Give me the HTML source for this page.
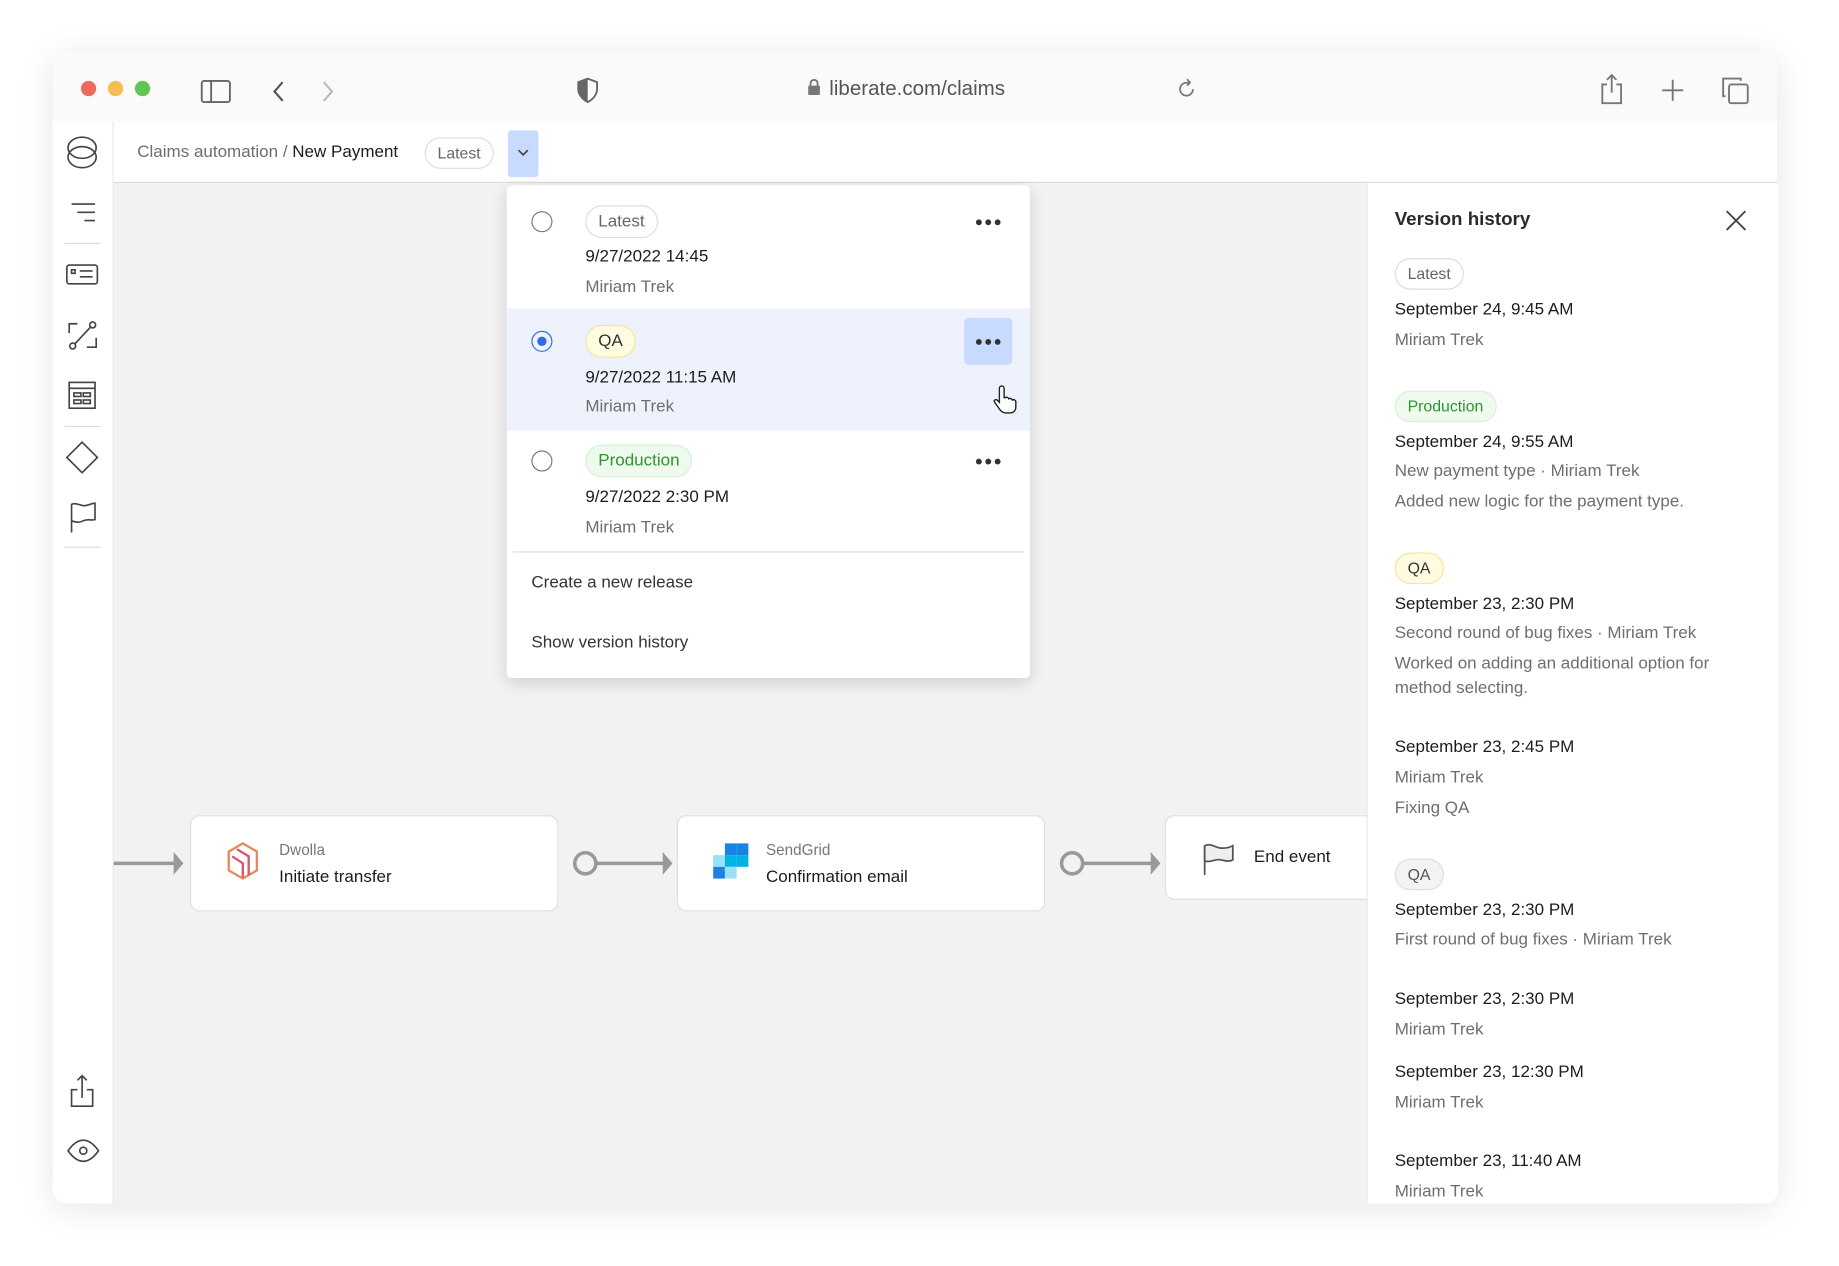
<!DOCTYPE html>
<html><head><meta charset="utf-8"><style>
html,body{margin:0;padding:0;background:#fff;overflow:hidden}
body{width:1839px;height:1266px;position:relative;font-family:"Liberation Sans",sans-serif}
#s{position:absolute;left:0;top:0;width:1568px;height:1080px;transform:scale(1.173);transform-origin:0 0}
.a{position:absolute}
.t{position:absolute;white-space:nowrap;line-height:20px;height:20px;font-size:14.5px;color:#1c1c1c}
.g{color:#6e6e6e}
.pill{position:absolute;height:25px;line-height:25px;border-radius:14px;font-size:13.5px;padding:0 10px;box-sizing:border-box}
.pl{border:1px solid #ddd;color:#666;background:#fff}
.pq{border:1px solid #f3e59a;background:#fefbe0;color:#333}
.pp{border:1px solid #d7efd7;background:#effaef;color:#2b962b}
.pg{border:1px solid #ddd;background:#f3f3f3;color:#555}
.radio{position:absolute;width:18px;height:18px;border:1.5px solid #777;border-radius:50%;box-sizing:border-box}
.dots{position:absolute;width:24px;height:6px}
.dots i{position:absolute;top:0;width:5px;height:5px;border-radius:50%;background:#333}
svg{position:absolute;overflow:visible}
</style></head><body><div id="s">
<div class="a" style="left:45px;top:45px;width:1470px;height:981px;border-radius:12px;background:#fff;box-shadow:0 4px 30px rgba(0,0,0,.10);overflow:hidden">
 <div class="a" style="left:0;top:0;width:1470px;height:59px;background:#fafaf8"></div>
 <div class="a" style="left:0;top:59px;width:51px;height:922px;background:#fff;border-right:1px solid #e6e6e6"></div>
 <div class="a" style="left:52px;top:59px;width:1418px;height:51px;background:#fff;border-bottom:1px solid #dcdcdc"></div>
 <div class="a" style="left:52px;top:111px;width:1068px;height:870px;background:#f2f2f2"></div>
</div>
<div class="a" style="left:69px;top:69px;width:13px;height:13px;border-radius:50%;background:#ed6a5e"></div>
<div class="a" style="left:92px;top:69px;width:13px;height:13px;border-radius:50%;background:#f5bf4f"></div>
<div class="a" style="left:115px;top:69px;width:13px;height:13px;border-radius:50%;background:#61c554"></div>
<svg style="left:171px;top:68px" width="26" height="20" fill="none" stroke="#666" stroke-width="1.6"><rect x="1" y="1" width="24" height="18" rx="2"/><line x1="9" y1="1" x2="9" y2="19"/></svg>
<svg style="left:231px;top:68px" width="12" height="20" fill="none" stroke="#555" stroke-width="1.8"><path d="M10 2L3 10L10 18"/></svg>
<svg style="left:274px;top:68px" width="12" height="20" fill="none" stroke="#bbb" stroke-width="1.8"><path d="M2 2L9 10L2 18"/></svg>
<svg style="left:491px;top:66px" width="20" height="22"><path d="M10 1L18 4V10C18 15 14 19 10 21C6 19 2 15 2 10V4Z" fill="none" stroke="#666" stroke-width="1.6"/><path d="M10 1L2 4V10C2 15 6 19 10 21Z" fill="#666"/></svg>
<svg style="left:689px;top:67px" width="10" height="14"><rect x="0" y="6" width="10" height="8" rx="1" fill="#777"/><path d="M2 6V4a3 3 0 0 1 6 0v2" fill="none" stroke="#777" stroke-width="1.6"/></svg>
<div class="t" style="left:707px;top:65px;font-size:17.5px;color:#555">liberate.com/claims</div>
<svg style="left:1004px;top:66px" width="16" height="18" fill="none" stroke="#777" stroke-width="1.5"><path d="M13 10a5.5 5.5 0 1 1-5.5-5.5H10"/><path d="M8 1.5L10.5 4.5L8 7"/></svg>
<svg style="left:1364px;top:63px" width="20" height="26" fill="none" stroke="#777" stroke-width="1.6"><path d="M6 9H2V25H18V9H14"/><path d="M10 16V1M6 5L10 1L14 5"/></svg>
<svg style="left:1417px;top:68px" width="18" height="18" stroke="#777" stroke-width="1.6"><path d="M9 0V18M0 9H18"/></svg>
<svg style="left:1468px;top:66px" width="23" height="23" fill="none" stroke="#777" stroke-width="1.6"><rect x="6" y="6" width="16" height="16" rx="2"/><path d="M3 16H1V1H16V3"/></svg>
<svg style="left:57px;top:116px" width="26" height="28" fill="none" stroke="#444" stroke-width="1.4"><ellipse cx="13" cy="10" rx="12" ry="9"/><ellipse cx="13" cy="18" rx="12" ry="9"/></svg>
<svg style="left:59px;top:173px" width="24" height="16" stroke="#444" stroke-width="1.4"><path d="M2 1H22M7 8H22M13 15H22"/></svg>
<div class="a" style="left:55px;top:207px;width:31px;height:1px;background:#ddd"></div>
<svg style="left:56px;top:225px" width="28" height="18" fill="none" stroke="#444" stroke-width="1.4"><rect x="1" y="1" width="26" height="16" rx="2"/><path d="M12 6H23M12 11H23"/><rect x="5" y="5" width="3" height="3"/></svg>
<svg style="left:58px;top:273px" width="25" height="26" fill="none" stroke="#444" stroke-width="1.4"><path d="M1 11V3H8M24 15V23H16"/><circle cx="4" cy="22" r="2.5"/><circle cx="21" cy="4" r="2.5"/><path d="M6 20L19 6"/></svg>
<svg style="left:58px;top:325px" width="24" height="24" fill="none" stroke="#444" stroke-width="1.4"><rect x="1" y="1" width="22" height="22"/><path d="M1 6H23"/><rect x="5" y="10" width="6" height="3"/><rect x="13" y="10" width="6" height="3"/><rect x="5" y="16" width="6" height="3"/><rect x="13" y="16" width="6" height="3"/></svg>
<div class="a" style="left:55px;top:363px;width:31px;height:1px;background:#ddd"></div>
<svg style="left:56px;top:376px" width="28" height="28" fill="none" stroke="#444" stroke-width="1.4"><path d="M14 1L27 14L14 27L1 14Z"/></svg>
<svg style="left:59px;top:428px" width="24" height="26" fill="none" stroke="#444" stroke-width="1.4"><path d="M2 26V2C7 0 10 4 14 3S20 1 22 1V15C18 16 16 14 12 16S5 17 2 16"/></svg>
<div class="a" style="left:55px;top:466px;width:31px;height:1px;background:#ddd"></div>
<svg style="left:60px;top:916px" width="20" height="28" fill="none" stroke="#444" stroke-width="1.4"><path d="M6 13H1V27H19V13H14"/><path d="M10 20V1M6 5L10 1L14 5"/></svg>
<svg style="left:57px;top:971px" width="28" height="20" fill="none" stroke="#444" stroke-width="1.4"><path d="M1 10C6 3 10 1 14 1S22 3 27 10C22 17 18 19 14 19S6 17 1 10Z"/><circle cx="14" cy="10" r="3"/></svg>
<div class="t" style="left:117px;top:120px;color:#6e6e6e">Claims automation / <span style="color:#1c1c1c">New Payment</span></div>
<div class="pill pl" style="left:362px;top:117px;height:27px;line-height:26px">Latest</div>
<div class="a" style="left:433px;top:111px;width:26px;height:40px;background:#c8dafd;border-radius:3px"></div>
<svg style="left:441px;top:127px" width="10" height="6" fill="none" stroke="#444" stroke-width="1.4"><path d="M1 1L5 5L9 1"/></svg>
<svg style="left:97px;top:725px" width="900" height="22" fill="none" stroke="#999" stroke-width="3"><path d="M0 11H54"/><path d="M52 4L58 11L52 18Z" fill="#999" stroke-width="2"/><circle cx="402" cy="11" r="9" fill="#f2f2f2"/><path d="M411 11H471"/><path d="M469 4L475 11L469 18Z" fill="#999" stroke-width="2"/><circle cx="817" cy="11" r="9" fill="#f2f2f2"/><path d="M826 11H887"/><path d="M885 4L891 11L885 18Z" fill="#999" stroke-width="2"/></svg>
<div class="a" style="left:162px;top:695px;width:314px;height:82px;background:#fff;border:1px solid #e0e0e0;border-radius:8px;box-sizing:border-box"></div>
<svg style="left:193px;top:718px" width="28" height="32" fill="none" stroke-width="2"><path d="M14 1L26 8V24L14 31L2 24V8Z" stroke="#e58a5f"/><path d="M9 6L19 12V28M5 12L14 18V30" stroke="#d9566a"/></svg>
<div class="t" style="left:238px;top:715px;font-size:13px;color:#777">Dwolla</div>
<div class="t" style="left:238px;top:738px">Initiate transfer</div>
<div class="a" style="left:577px;top:695px;width:314px;height:82px;background:#fff;border:1px solid #e0e0e0;border-radius:8px;box-sizing:border-box"></div>
<svg style="left:608px;top:719px" width="30" height="30"><rect x="10" y="0" width="10" height="10" fill="#1a82e2"/><rect x="20" y="0" width="10" height="10" fill="#1a82e2"/><rect x="0" y="10" width="10" height="10" fill="#99e1f4"/><rect x="10" y="10" width="10" height="10" fill="#00b3e3"/><rect x="20" y="10" width="10" height="10" fill="#00b3e3"/><rect x="0" y="20" width="10" height="10" fill="#1a82e2"/><rect x="10" y="20" width="10" height="10" fill="#99e1f4"/></svg>
<div class="t" style="left:653px;top:715px;font-size:13px;color:#777">SendGrid</div>
<div class="t" style="left:653px;top:738px">Confirmation email</div>
<div class="a" style="left:993px;top:695px;width:190px;height:72px;background:#fff;border:1px solid #e0e0e0;border-radius:8px;box-sizing:border-box"></div>
<svg style="left:1026px;top:719px" width="26" height="28" stroke="#555" stroke-width="1.5"><path d="M1 27V2" fill="none"/><path d="M1 2C7 -1 11 5 17 4C20 4 23 3 25 2V14C20 17 16 13 11 14C7 15 4 16 1 15Z" fill="#eee"/></svg>
<div class="t" style="left:1069px;top:721px">End event</div>
<div class="a" style="left:1165px;top:157px;width:350px;height:869px;background:#fff;border-left:1px solid #e4e4e4;border-bottom-right-radius:12px"></div>
<div class="t" style="left:1189px;top:178px;font-size:16px;font-weight:bold;color:#2a2a2a">Version history</div>
<svg style="left:1471px;top:179px" width="18" height="18" stroke="#444" stroke-width="1.6"><path d="M1 1L17 17M17 1L1 17"/></svg>
<div class="pill pl" style="left:1189px;top:220px;height:27px;line-height:26px">Latest</div>
<div class="t" style="left:1189px;top:254px">September 24, 9:45 AM</div>
<div class="t g" style="left:1189px;top:280px">Miriam Trek</div>
<div class="pill pp" style="left:1189px;top:333px;height:27px;line-height:26px">Production</div>
<div class="t" style="left:1189px;top:367px">September 24, 9:55 AM</div>
<div class="t g" style="left:1189px;top:392px">New payment type · Miriam Trek</div>
<div class="t g" style="left:1189px;top:418px">Added new logic for the payment type.</div>
<div class="pill pq" style="left:1189px;top:471px;height:27px;line-height:26px">QA</div>
<div class="t" style="left:1189px;top:505px">September 23, 2:30 PM</div>
<div class="t g" style="left:1189px;top:530px">Second round of bug fixes · Miriam Trek</div>
<div class="t g" style="left:1189px;top:556px">Worked on adding an additional option for</div>
<div class="t g" style="left:1189px;top:577px">method selecting.</div>
<div class="t" style="left:1189px;top:627px">September 23, 2:45 PM</div>
<div class="t g" style="left:1189px;top:653px">Miriam Trek</div>
<div class="t g" style="left:1189px;top:679px">Fixing QA</div>
<div class="pill pg" style="left:1189px;top:732px;height:27px;line-height:26px">QA</div>
<div class="t" style="left:1189px;top:766px">September 23, 2:30 PM</div>
<div class="t g" style="left:1189px;top:791px">First round of bug fixes · Miriam Trek</div>
<div class="t" style="left:1189px;top:842px">September 23, 2:30 PM</div>
<div class="t g" style="left:1189px;top:868px">Miriam Trek</div>
<div class="t" style="left:1189px;top:904px">September 23, 12:30 PM</div>
<div class="t g" style="left:1189px;top:930px">Miriam Trek</div>
<div class="t" style="left:1189px;top:980px">September 23, 11:40 AM</div>
<div class="t g" style="left:1189px;top:1006px">Miriam Trek</div>
<div class="a" style="left:432px;top:158px;width:446px;height:420px;background:#fff;border-radius:4px;box-shadow:0 4px 14px rgba(0,0,0,.14);overflow:hidden">
 <div class="a" style="left:0;top:105px;width:446px;height:104px;background:#edf2fd"></div>
 <div class="a" style="left:5px;top:312px;width:436px;height:1px;background:#ddd"></div>
</div>
<div class="radio" style="left:453px;top:180px"></div>
<div class="pill pl" style="left:499px;top:175px;height:28px;line-height:27px;font-size:14.5px">Latest</div>
<div class="dots" style="left:832px;top:187px"><i style="left:0"></i><i style="left:8px"></i><i style="left:16px"></i></div>
<div class="t" style="left:499px;top:209px">9/27/2022 14:45</div>
<div class="t g" style="left:499px;top:235px">Miriam Trek</div>
<div class="radio" style="left:453px;top:282px;border-color:#2f6fe0"></div>
<div class="a" style="left:458px;top:287px;width:8px;height:8px;border-radius:50%;background:#2f6fe0"></div>
<div class="pill pq" style="left:499px;top:277px;height:28px;line-height:27px;font-size:14.5px">QA</div>
<div class="a" style="left:822px;top:271px;width:41px;height:40px;background:#c8dafd;border-radius:4px"></div>
<div class="dots" style="left:832px;top:289px"><i style="left:0"></i><i style="left:8px"></i><i style="left:16px"></i></div>
<div class="t" style="left:499px;top:312px">9/27/2022 11:15 AM</div>
<div class="t g" style="left:499px;top:337px">Miriam Trek</div>
<svg style="left:847px;top:329px" width="20" height="24"><path d="M5 2a2 2 0 0 1 4 0v8h1a2 2 0 0 1 3 1 2 2 0 0 1 3 1 2 2 0 0 1 3 2v4c0 3-2 5-5 5h-4c-2 0-3-1-4-2L1 14c-1-1 0-3 2-2l2 2Z" fill="#fff" stroke="#222" stroke-width="1.2"/></svg>
<div class="radio" style="left:453px;top:384px"></div>
<div class="pill pp" style="left:499px;top:379px;height:28px;line-height:27px;font-size:14.5px">Production</div>
<div class="dots" style="left:832px;top:391px"><i style="left:0"></i><i style="left:8px"></i><i style="left:16px"></i></div>
<div class="t" style="left:499px;top:414px">9/27/2022 2:30 PM</div>
<div class="t g" style="left:499px;top:440px">Miriam Trek</div>
<div class="t" style="left:453px;top:487px;color:#333">Create a new release</div>
<div class="t" style="left:453px;top:538px;color:#333">Show version history</div>
</div></body></html>
